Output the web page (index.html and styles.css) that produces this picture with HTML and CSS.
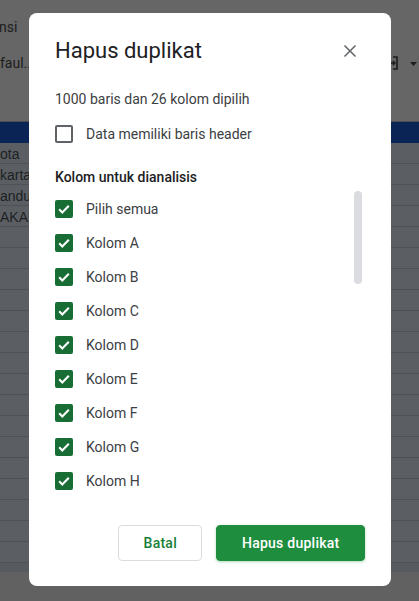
FILE: index.html
```html
<!DOCTYPE html>
<html lang="id">
<head>
<meta charset="utf-8">
<title>Hapus duplikat</title>
<link rel="stylesheet" href="styles.css">
</head>
<body>
<div class="sheet">
  <div class="menubar"><span class="menu-text">nsi</span></div>
  <div class="toolbar">
    <span class="font-name">faul..</span>
    <span class="spacer"></span>
    <svg class="merge-icon" width="10" height="14" viewBox="0 0 10 14"><path d="M4 1h4v12H4" fill="none" stroke="#1d1d1d" stroke-width="1.6"/><path d="M0 7h6M4 5l2 2-2 2" fill="none" stroke="#1d1d1d" stroke-width="1.4"/></svg>
    <svg class="caret" width="7" height="4" viewBox="0 0 7 4"><path d="M0 0h7L3.5 4z" fill="#1d1d1d"/></svg>
  </div>
  <div class="formula"></div>
  <div class="header-row"></div>
  <div class="rows">
    <div class="row">ota</div>
    <div class="row">karta</div>
    <div class="row">andu</div>
    <div class="row">AKAR</div>
    <div class="row"></div>
    <div class="row"></div>
    <div class="row"></div>
    <div class="row"></div>
    <div class="row"></div>
    <div class="row"></div>
    <div class="row"></div>
    <div class="row"></div>
    <div class="row"></div>
    <div class="row"></div>
    <div class="row"></div>
    <div class="row"></div>
    <div class="row"></div>
    <div class="row"></div>
    <div class="row"></div>
    <div class="row"></div>
  </div>
  <div class="hscroll"></div>
  <div class="tabs"></div>
</div>

<div class="dialog">
  <div class="dialog-head">
    <h1 class="dialog-title">Hapus duplikat</h1>
    <svg class="close" width="24" height="24" viewBox="0 0 24 24"><path d="M6.5 6.5l11 11M17.5 6.5l-11 11" stroke="#5f6368" stroke-width="1.5" fill="none"/></svg>
  </div>
  <div class="subtitle">1000 baris dan 26 kolom dipilih</div>
  <div class="check-row header-check">
    <span class="box"></span>
    <span class="label">Data memiliki baris header</span>
  </div>
  <div class="section-title">Kolom untuk dianalisis</div>
  <div class="list-wrap">
    <div class="items">
      <div class="check-row item"><span class="box checked"><svg width="18" height="18" viewBox="0 0 18 18"><path d="M4.2 9.3l3.1 3.1 6.5-6.6" stroke="#fff" stroke-width="2.1" fill="none"/></svg></span><span class="label">Pilih semua</span></div>
      <div class="check-row item"><span class="box checked"><svg width="18" height="18" viewBox="0 0 18 18"><path d="M4.2 9.3l3.1 3.1 6.5-6.6" stroke="#fff" stroke-width="2.1" fill="none"/></svg></span><span class="label">Kolom A</span></div>
      <div class="check-row item"><span class="box checked"><svg width="18" height="18" viewBox="0 0 18 18"><path d="M4.2 9.3l3.1 3.1 6.5-6.6" stroke="#fff" stroke-width="2.1" fill="none"/></svg></span><span class="label">Kolom B</span></div>
      <div class="check-row item"><span class="box checked"><svg width="18" height="18" viewBox="0 0 18 18"><path d="M4.2 9.3l3.1 3.1 6.5-6.6" stroke="#fff" stroke-width="2.1" fill="none"/></svg></span><span class="label">Kolom C</span></div>
      <div class="check-row item"><span class="box checked"><svg width="18" height="18" viewBox="0 0 18 18"><path d="M4.2 9.3l3.1 3.1 6.5-6.6" stroke="#fff" stroke-width="2.1" fill="none"/></svg></span><span class="label">Kolom D</span></div>
      <div class="check-row item"><span class="box checked"><svg width="18" height="18" viewBox="0 0 18 18"><path d="M4.2 9.3l3.1 3.1 6.5-6.6" stroke="#fff" stroke-width="2.1" fill="none"/></svg></span><span class="label">Kolom E</span></div>
      <div class="check-row item"><span class="box checked"><svg width="18" height="18" viewBox="0 0 18 18"><path d="M4.2 9.3l3.1 3.1 6.5-6.6" stroke="#fff" stroke-width="2.1" fill="none"/></svg></span><span class="label">Kolom F</span></div>
      <div class="check-row item"><span class="box checked"><svg width="18" height="18" viewBox="0 0 18 18"><path d="M4.2 9.3l3.1 3.1 6.5-6.6" stroke="#fff" stroke-width="2.1" fill="none"/></svg></span><span class="label">Kolom G</span></div>
      <div class="check-row item"><span class="box checked"><svg width="18" height="18" viewBox="0 0 18 18"><path d="M4.2 9.3l3.1 3.1 6.5-6.6" stroke="#fff" stroke-width="2.1" fill="none"/></svg></span><span class="label">Kolom H</span></div>
    </div>
    <div class="scroll-track"><div class="scroll-thumb"></div></div>
  </div>
  <div class="footer">
    <button class="btn btn-secondary">Batal</button>
    <button class="btn btn-primary">Hapus duplikat</button>
  </div>
</div>
</body>
</html>
```

FILE: styles.css
```css
* { box-sizing: border-box; }
html, body { margin: 0; padding: 0; }
body {
  width: 419px;
  height: 601px;
  overflow: hidden;
  position: relative;
  background: #666666;
  font-family: Roboto, "Liberation Sans", Arial, sans-serif;
}

.sheet {
  display: flex;
  flex-direction: column;
  height: 601px;
}
.menubar {
  height: 40px;
  padding-top: 17px;
  background: #666666;
}
.menu-text {
  display: block;
  font-size: 14px;
  line-height: 20px;
  color: #1c1c1c;
  margin-left: -1px;
}
.toolbar {
  height: 46px;
  display: flex;
  align-items: center;
  background: #666666;
}
.font-name {
  font-size: 14px;
  line-height: 20px;
  color: #1c1c1c;
}
.spacer { flex: 1; }
.merge-icon { margin-right: 11px; }
.caret { margin-right: 2px; margin-top: 1px; }
.formula {
  height: 35px;
  background: #666666;
}
.header-row {
  height: 22px;
  background: #0a2456;
  border-top: 1px solid #4d4f55;
}
.rows { display: flex; flex-direction: column; }
.row {
  height: 21px;
  border-bottom: 1px solid #4e5257;
  background: #5b5f64;
  display: flex;
  align-items: flex-end;
  padding-bottom: 1px;
  font-family: "Liberation Sans", Arial, sans-serif;
  font-size: 14px;
  line-height: 16px;
  color: #1d1f22;
  white-space: nowrap;
}
.hscroll {
  height: 9px;
  background: #575a5e;
}
.tabs {
  flex: 1;
  background: #616161;
}

/* Dialog */
.dialog {
  position: absolute;
  left: 29px;
  top: 13px;
  width: 362px;
  height: 573px;
  background: #ffffff;
  border-radius: 8px;
  padding: 24px 29px 25px 26px;
  display: flex;
  flex-direction: column;
}
.dialog-head {
  display: flex;
  align-items: center;
  justify-content: space-between;
  height: 28px;
}
.dialog-title {
  margin: 0;
  font-size: 22px;
  line-height: 28px;
  font-weight: 400;
  color: #202124;
}
.subtitle {
  margin-top: 24px;
  font-size: 14px;
  line-height: 20px;
  color: #3c4043;
}
.check-row {
  display: flex;
  align-items: center;
}
.header-check {
  margin-top: 14px;
  height: 20px;
  padding-top: 1px;
}
.box {
  width: 18px;
  height: 18px;
  border: 2px solid #5f6368;
  border-radius: 2px;
  flex: none;
  display: flex;
  align-items: center;
  justify-content: center;
}
.box.checked {
  border: none;
  background: #186d34;
}
.label {
  margin-left: 13px;
  font-size: 14px;
  line-height: 20px;
  color: #3c4043;
}
.section-title {
  margin-top: 24px;
  font-size: 14px;
  line-height: 20px;
  font-weight: 500;
  color: #202124;
}
.list-wrap {
  margin-top: 5px;
  height: 306px;
  display: flex;
}
.items {
  flex: 1;
  overflow: hidden;
}
.item { height: 34px; }
.scroll-track {
  width: 8px;
  flex: none;
}
.scroll-thumb {
  margin-top: -1px;
  height: 93px;
  border-radius: 4px;
  background: #dadce0;
}
.footer {
  margin-top: auto;
  margin-right: -3px;
  display: flex;
  justify-content: flex-end;
  gap: 14px;
}
.btn {
  height: 36px;
  padding: 0 24.5px;
  border-radius: 4px;
  font-family: Roboto, "Liberation Sans", Arial, sans-serif;
  font-size: 14px;
  font-weight: 500;
  letter-spacing: 0.25px;
  border: 1px solid transparent;
}
.btn-secondary {
  background: #ffffff;
  border-color: #dadce0;
  color: #188038;
}
.btn-primary {
  background: #1e8e3e;
  border-color: #1e8e3e;
  color: #ffffff;
  box-shadow: 0 1px 3px rgba(30, 142, 62, 0.35);
}
```
